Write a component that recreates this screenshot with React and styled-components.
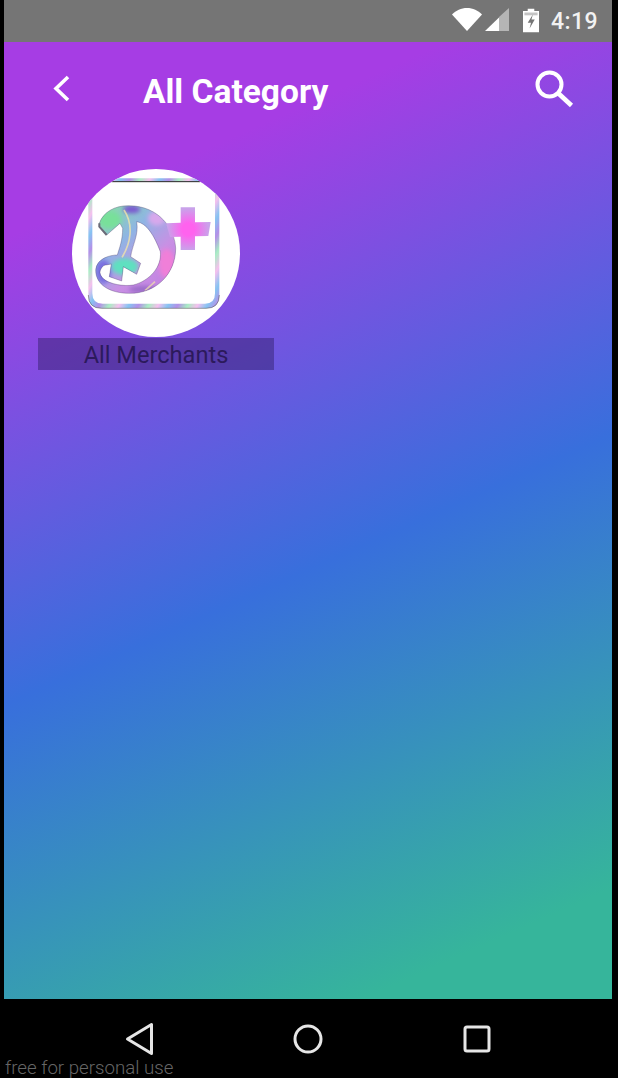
import React from "react";
import styled, { createGlobalStyle } from "styled-components";

const categories = [{ id: 1, name: "All Merchants" }];

const GlobalStyle = createGlobalStyle`
  html, body {
    margin: 0;
    padding: 0;
    background: #000;
  }
`;

const Device = styled.div`
  position: relative;
  width: 618px;
  height: 1078px;
  padding: 0 6px 0 4px;
  box-sizing: border-box;
  display: flex;
  flex-direction: column;
  background: #000;
  overflow: hidden;
  font-family: Roboto, "Liberation Sans", sans-serif;
`;

const StatusBar = styled.div`
  height: 42px;
  flex: none;
  display: flex;
  align-items: center;
  justify-content: flex-end;
  padding-right: 14px;
  background: #757575;
  color: #fff;
`;

const WifiIcon = styled.svg`
  width: 30px;
  height: 23px;
  margin-bottom: 3px;
`;

const SignalIcon = styled.svg`
  width: 24px;
  height: 23px;
  margin: 0 0 3px 3px;
`;

const BatteryIcon = styled.svg`
  width: 16px;
  height: 25px;
  margin: 0 12px 1px 14px;
`;

const Clock = styled.span`
  font-size: 23px;
  font-weight: 500;
  letter-spacing: 0.4px;
  color: #f2f2f2;
`;

const Screen = styled.main`
  height: 957px;
  flex: none;
  background: linear-gradient(156deg, #a63de4 16%, #386fdc 54%, #36b59b 91%);
`;

const Header = styled.header`
  height: 98px;
  display: flex;
  align-items: center;
  padding: 0 38px 0 49px;
`;

const BackButton = styled.svg`
  width: 17px;
  height: 27px;
  margin: 0 73px 5px 0;
`;

const Title = styled.h1`
  margin: 0;
  flex: 1;
  font-size: 33.5px;
  font-weight: 700;
  color: #fff;
`;

const SearchButton = styled.svg`
  width: 40px;
  height: 40px;
  margin-bottom: 5px;
`;

const CategoryGrid = styled.section`
  display: grid;
  grid-template-columns: 236px;
  padding: 29px 0 0 34px;
`;

const CategoryCard = styled.article`
  display: flex;
  flex-direction: column;
  align-items: center;
`;

const LogoCircle = styled.div`
  width: 168px;
  height: 168px;
  border-radius: 50%;
  background: #fff;
  overflow: hidden;
`;

const LogoArt = styled.svg`
  display: block;
  width: 168px;
  height: 168px;
`;

const CategoryLabel = styled.div`
  width: 100%;
  height: 32px;
  margin-top: 1px;
  line-height: 35px;
  text-align: center;
  font-size: 23.6px;
  color: #2c1a5c;
  background: rgba(40, 25, 90, 0.42);
`;

const NavBar = styled.nav`
  flex: 1;
  display: flex;
  align-items: center;
  justify-content: center;
  gap: 129px;
  padding: 1px 0 0;
`;

const NavIcon = styled.svg`
  width: 40px;
  height: 40px;
`;

const Watermark = styled.span`
  position: absolute;
  left: 5px;
  bottom: 1px;
  font-size: 18.7px;
  line-height: 18px;
  font-weight: 300;
  color: #666;
`;

const D_PATH =
  "M118 190L118 200L140 225L180 190L188 205C188 240 178 265 172 285C150 285 110 295 107 330C107 375 150 400 210 400C290 400 347 340 347 265C345 210 300 137 205 137C165 137 130 155 118 190Z" +
  "M230 185C260 190 282 225 301 275C306 320 270 362 220 375C190 380 150 372 132 358C118 345 114 332 132 316L154 312L148 350L185 363L190 320L230 343L242 310L212 290C217 255 237 225 230 185Z";

const PLUS_PATH =
  "M362 142H405V187L452 186L445 228L405 229V270H362V230L330 231L318 190L362 188Z";

const FRAME_PATH =
  "M152 55H425L418 64H158ZM85 117L97 112V400Q97 431 128 431H435Q465 431 465 400V97L478 92V405Q478 445 438 445H125Q85 445 85 405Z";

const LogoMark = () => (
  <LogoArt viewBox="36 27 504 504">
    <defs>
      <linearGradient id="frameFoil" gradientUnits="userSpaceOnUse" x1="80" y1="80" x2="170" y2="130" spreadMethod="repeat">
        <stop offset="0" stopColor="#b48fe8" />
        <stop offset="0.25" stopColor="#a8eec4" />
        <stop offset="0.5" stopColor="#f6c0ee" />
        <stop offset="0.75" stopColor="#86c4f2" />
        <stop offset="1" stopColor="#b48fe8" />
      </linearGradient>
      <linearGradient id="foil" gradientUnits="userSpaceOnUse" x1="120" y1="150" x2="340" y2="390">
        <stop offset="0" stopColor="#86dfa4" />
        <stop offset="0.35" stopColor="#8fb4e4" />
        <stop offset="0.65" stopColor="#c890e4" />
        <stop offset="1" stopColor="#c07ee0" />
      </linearGradient>
      <radialGradient id="plusFoil" gradientUnits="userSpaceOnUse" cx="385" cy="208" r="62">
        <stop offset="0.3" stopColor="#ff62ee" />
        <stop offset="1" stopColor="#c9a2ea" />
      </radialGradient>
      <clipPath id="dClip">
        <path d={D_PATH} clipRule="evenodd" />
      </clipPath>
      <filter id="soft">
        <feGaussianBlur stdDeviation="7" />
      </filter>
    </defs>
    <path d={FRAME_PATH} fill="url(#frameFoil)" />
    <path d="M85 405Q85 445 125 445H438Q478 445 478 405" fill="none" stroke="#444" strokeWidth="1.500" />
    <path d="M155 65H420" stroke="#222" strokeWidth="3" fill="none" />
    <path d={D_PATH} fill="url(#foil)" fillRule="evenodd" />
    <g clipPath="url(#dClip)">
      <g filter="url(#soft)">
        <ellipse cx="215" cy="148" rx="26" ry="12" fill="#7a58d0" />
        <ellipse cx="150" cy="180" rx="34" ry="26" fill="#78e09a" />
        <ellipse cx="195" cy="320" rx="40" ry="26" fill="#5fe0c0" />
        <ellipse cx="130" cy="335" rx="24" ry="36" fill="#7a70e0" />
        <ellipse cx="320" cy="310" rx="24" ry="44" fill="#f07fd8" />
        <ellipse cx="290" cy="175" rx="26" ry="22" fill="#d8a8ec" />
        <ellipse cx="250" cy="388" rx="44" ry="10" fill="#9a6cc8" />
      </g>
      <path d="M192 150C222 195 212 250 186 292" fill="none" stroke="#f4e7a8" strokeWidth="5" opacity="0.75" />
      <path d="M255 392 285 365" fill="none" stroke="#f4e7a8" strokeWidth="5" opacity="0.7" />
    </g>
    <path d={D_PATH} fill="none" stroke="#4a3a66" strokeWidth="1" />
    <path d="M118 190L118 200L140 225" fill="none" stroke="#6b6b78" strokeWidth="6" />
    <path d={PLUS_PATH} fill="url(#plusFoil)" />
  </LogoArt>
);

const App = () => (
  <Device>
    <GlobalStyle />
    <StatusBar>
      <WifiIcon viewBox="0 0 30 23">
        <path d="M0 6.500C4 2.500 9 0 15 0s11 2.500 15 6.500L15 23Z" fill="#fff" />
      </WifiIcon>
      <SignalIcon viewBox="0 0 24 23">
        <path d="M24 0V23H14V9Z" fill="#b5b5b5" />
        <path d="M14 9.500V23H0Z" fill="#fff" />
      </SignalIcon>
      <BatteryIcon viewBox="0 0 17 25">
        <path d="M5 0h7v2.500h5V25H0V2.500h5Z" fill="#fff" />
        <path d="M1.500 4h14v3h-14Z" fill="#c4c4c4" />
        <path d="M10.500 6 5 15h3.500l-1.500 6 5.500-9.500H9Z" fill="#757575" />
      </BatteryIcon>
      <Clock>4:19</Clock>
    </StatusBar>
    <Screen>
      <Header>
        <BackButton viewBox="0 0 17 27">
          <path d="M15 2 3 13.500 15 25" fill="none" stroke="#fff" strokeWidth="3.600" />
        </BackButton>
        <Title>All Category</Title>
        <SearchButton viewBox="0 0 40 40">
          <circle cx="15.500" cy="15.500" r="12" fill="none" stroke="#fff" strokeWidth="4" />
          <path d="M24 24 37.500 36.500" fill="none" stroke="#fff" strokeWidth="4.600" />
        </SearchButton>
      </Header>
      <CategoryGrid>
        {categories.map((category) => (
          <CategoryCard key={category.id}>
            <LogoCircle>
              <LogoMark />
            </LogoCircle>
            <CategoryLabel>{category.name}</CategoryLabel>
          </CategoryCard>
        ))}
      </CategoryGrid>
    </Screen>
    <NavBar>
      <NavIcon viewBox="0 0 40 40">
        <path d="M32.500 5.500V34.500L8.500 20Z" fill="none" stroke="#e6e6e6" strokeWidth="3" strokeLinejoin="round" />
      </NavIcon>
      <NavIcon viewBox="0 0 40 40">
        <circle cx="20" cy="20" r="13" fill="none" stroke="#e6e6e6" strokeWidth="3" />
      </NavIcon>
      <NavIcon viewBox="0 0 40 40">
        <rect x="8" y="8" width="24" height="24" rx="2" fill="none" stroke="#e6e6e6" strokeWidth="3" />
      </NavIcon>
    </NavBar>
    <Watermark>free for personal use</Watermark>
  </Device>
);

export default App;
